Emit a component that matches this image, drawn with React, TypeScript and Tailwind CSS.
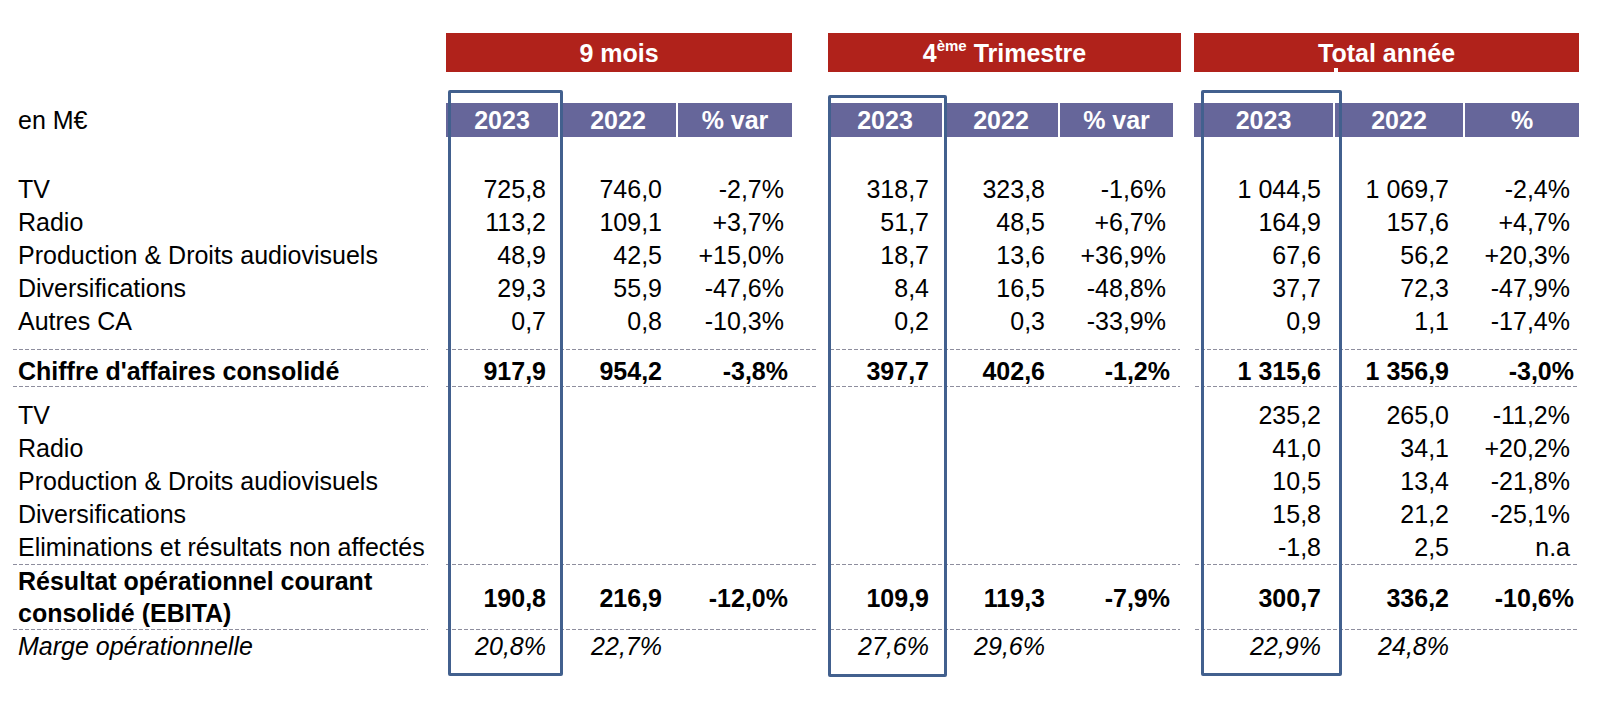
import React from 'react'

// column widths + left gaps, then right padding for the figures
const colBox = [
  'w-[112px] ml-[18px]',
  'w-[116px] ml-[2px]',
  'w-[114px] ml-[2px]',
  'w-[114px] ml-[36px]',
  'w-[114px] ml-[2px]',
  'w-[113px] ml-[2px]',
  'w-[139px] ml-[21px]',
  'w-[128px] ml-[2px]',
  'w-[114px] ml-[2px]',
]
const colPad = [
  'pr-[12px]', 'pr-[14px]', 'pr-[8px]',
  'pr-[13px]', 'pr-[13px]', 'pr-[7px]',
  'pr-[12px]', 'pr-[14px]', 'pr-[9px]',
]
// bold % figures sit a little further right in the original
const colPadBold = [
  'pr-[12px]', 'pr-[14px]', 'pr-[4px]',
  'pr-[13px]', 'pr-[13px]', 'pr-[3px]',
  'pr-[12px]', 'pr-[14px]', 'pr-[5px]',
]
const years = ['2023', '2022', '% var', '2023', '2022', '% var', '2023', '2022', '%']

const revenue = [
  ['TV', '725,8', '746,0', '-2,7%', '318,7', '323,8', '-1,6%', '1 044,5', '1 069,7', '-2,4%'],
  ['Radio', '113,2', '109,1', '+3,7%', '51,7', '48,5', '+6,7%', '164,9', '157,6', '+4,7%'],
  ['Production & Droits audiovisuels', '48,9', '42,5', '+15,0%', '18,7', '13,6', '+36,9%', '67,6', '56,2', '+20,3%'],
  ['Diversifications', '29,3', '55,9', '-47,6%', '8,4', '16,5', '-48,8%', '37,7', '72,3', '-47,9%'],
  ['Autres CA', '0,7', '0,8', '-10,3%', '0,2', '0,3', '-33,9%', '0,9', '1,1', '-17,4%'],
]
const revenueTotal = ["Chiffre d'affaires consolidé", '917,9', '954,2', '-3,8%', '397,7', '402,6', '-1,2%', '1 315,6', '1 356,9', '-3,0%']

const ebita = [
  ['TV', '', '', '', '', '', '', '235,2', '265,0', '-11,2%'],
  ['Radio', '', '', '', '', '', '', '41,0', '34,1', '+20,2%'],
  ['Production & Droits audiovisuels', '', '', '', '', '', '', '10,5', '13,4', '-21,8%'],
  ['Diversifications', '', '', '', '', '', '', '15,8', '21,2', '-25,1%'],
  ['Eliminations et résultats non affectés', '', '', '', '', '', '', '-1,8', '2,5', 'n.a'],
]
const ebitaTotal = ['190,8', '216,9', '-12,0%', '109,9', '119,3', '-7,9%', '300,7', '336,2', '-10,6%']
const marge = ['20,8%', '22,7%', '', '27,6%', '29,6%', '', '22,9%', '24,8%', '']

const dash = 'bg-[repeating-linear-gradient(90deg,#8e8e9e_0px,#8e8e9e_4px,transparent_4px,transparent_6px)]'

function Sep() {
  return (
    <div className="flex h-px">
      <div className={`w-[415px] ${dash}`} />
      <div className={`ml-[18px] w-[370px] ${dash}`} />
      <div className={`ml-[14px] w-[350px] ${dash}`} />
      <div className={`ml-[15px] w-[383px] ${dash}`} />
    </div>
  )
}

function Row({ row }: { row: string[] }) {
  return (
    <div className="flex h-[33px] leading-[33px] whitespace-nowrap">
      <div className="w-[415px] pl-[5px]">{row[0]}</div>
      {row.slice(1).map((v, i) => (
        <div key={i} className={`${colBox[i]} ${colPad[i]} text-right`}>{v}</div>
      ))}
    </div>
  )
}

export default function App() {
  return (
    <div className="relative w-[1608px] h-[702px] overflow-hidden bg-white text-black font-['Liberation_Sans',Arial,sans-serif] text-[25px]">
      <div className="pl-[13px] pt-[33px]">
        {/* period headers */}
        <div className="flex h-[39px] leading-[39px] font-bold text-white whitespace-nowrap">
          <div className="w-[415px]" />
          <div className="ml-[18px] w-[346px] bg-[#b0221b] text-center pt-px">9 mois</div>
          <div className="ml-[36px] w-[353px] bg-[#b0221b] text-center pt-px">
            4<sup className="text-[15px] -top-[11px]">ème</sup> Trimestre
          </div>
          <div className="ml-[13px] w-[385px] bg-[#b0221b] text-center pt-px">Total année</div>
        </div>

        {/* year headers */}
        <div className="mt-[31px] flex h-[34px] leading-[34px] whitespace-nowrap">
          <div className="w-[415px] pl-[5px]">en M€</div>
          {years.map((y, i) => (
            <div key={i} className={`${colBox[i]} bg-[#66669a] text-center font-bold text-white`}>{y}</div>
          ))}
        </div>

        {/* chiffre d'affaires */}
        <div className="mt-[36px]">
          {revenue.map((r) => <Row key={r[0]} row={r} />)}
        </div>
        <div className="mt-[11px]"><Sep /></div>
        <div className="flex h-[36px] pt-[5px] leading-[33px] font-bold whitespace-nowrap">
          <div className="w-[415px] pl-[5px]">{revenueTotal[0]}</div>
          {revenueTotal.slice(1).map((v, i) => (
            <div key={i} className={`${colBox[i]} ${colPadBold[i]} text-right`}>{v}</div>
          ))}
        </div>
        <Sep />

        {/* EBITA */}
        <div className="mt-[12px]">
          {ebita.map((r) => <Row key={r[0]} row={r} />)}
        </div>
        <Sep />
        <div className="flex h-[64px] font-bold">
          <div className="w-[415px] pl-[5px] leading-[32px]">
            Résultat opérationnel courant<br />consolidé (EBITA)
          </div>
          {ebitaTotal.map((v, i) => (
            <div key={i} className={`${colBox[i]} ${colPadBold[i]} flex items-center justify-end leading-[32px] pt-px whitespace-nowrap`}>{v}</div>
          ))}
        </div>
        <Sep />
        <div className="flex h-[33px] leading-[33px] italic whitespace-nowrap">
          <div className="w-[415px] pl-[5px]">Marge opérationnelle</div>
          {marge.map((v, i) => (
            <div key={i} className={`${colBox[i]} ${colPad[i]} text-right`}>{v}</div>
          ))}
        </div>
      </div>

      {/* small white tick under "Total année" */}
      <div className="absolute left-[1334px] top-[68px] w-[4px] h-[4px] bg-white" />

      {/* highlight frames over the 2023 columns */}
      <div className="absolute left-[448px] top-[90px] w-[115px] h-[586px] rounded-[2px] border-[3px] border-[#42608e]" />
      <div className="absolute left-[828px] top-[95px] w-[119px] h-[582px] rounded-[2px] border-[3px] border-[#42608e]" />
      <div className="absolute left-[1201px] top-[90px] w-[141px] h-[586px] rounded-[2px] border-[3px] border-[#42608e]" />
    </div>
  )
}
